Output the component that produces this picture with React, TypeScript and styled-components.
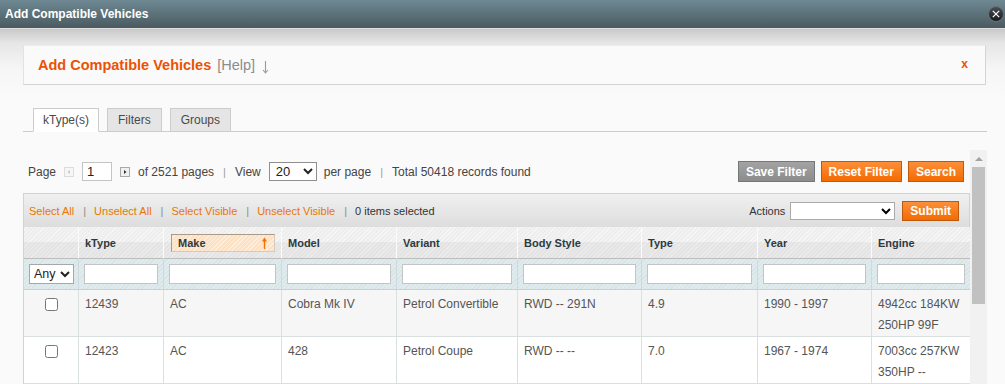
import styled, { createGlobalStyle } from 'styled-components'

const FONT = "'Liberation Sans', Arial, Helvetica, sans-serif"

const GlobalStyle = createGlobalStyle`
  * { box-sizing: border-box; }
  html, body { margin: 0; padding: 0; height: 384px; overflow: hidden; }
  body { font-family: ${FONT}; background: #fafafa; color: #444; }
  #root { height: 100%; }
`

const columns = [
  { key: 'check', label: '', width: 55 },
  { key: 'ktype', label: 'kType', width: 85 },
  { key: 'make', label: 'Make', width: 118, sorted: true },
  { key: 'model', label: 'Model', width: 115 },
  { key: 'variant', label: 'Variant', width: 121 },
  { key: 'body', label: 'Body Style', width: 124 },
  { key: 'type', label: 'Type', width: 116 },
  { key: 'year', label: 'Year', width: 114 },
  { key: 'engine', label: 'Engine', width: 99 },
]

const rows = [
  {
    ktype: '12439',
    make: 'AC',
    model: 'Cobra Mk IV',
    variant: 'Petrol Convertible',
    body: 'RWD -- 291N',
    type: '4.9',
    year: '1990 - 1997',
    engine: '4942cc 184KW 250HP 99F',
  },
  {
    ktype: '12423',
    make: 'AC',
    model: '428',
    variant: 'Petrol Coupe',
    body: 'RWD -- --',
    type: '7.0',
    year: '1967 - 1974',
    engine: '7003cc 257KW 350HP --',
  },
]

const CloseIcon = () => (
  <svg width="16" height="16" viewBox="0 0 16 16">
    <defs>
      <linearGradient id="cl" x1="0" y1="0" x2="0" y2="1">
        <stop offset="0" stopColor="#4a5054" />
        <stop offset="1" stopColor="#15191b" />
      </linearGradient>
    </defs>
    <circle cx="8" cy="8" r="7.5" fill="url(#cl)" stroke="#6b7377" />
    <path d="M4.8 4.8 L11.2 11.2 M11.2 4.8 L4.8 11.2" stroke="#fff" strokeWidth="1.2" />
  </svg>
)

const DownArrow = () => (
  <svg width="7" height="14" viewBox="0 0 7 14">
    <path d="M3.5 1 V13 M1 10 L3.5 13 L6 10" stroke="#9a9a9a" strokeWidth="1.1" fill="none" />
  </svg>
)

const UpArrow = () => (
  <svg width="7" height="12" viewBox="0 0 7 12">
    <path d="M3.5 3 V12" stroke="#f07000" strokeWidth="1.4" />
    <path d="M1 4.5 L3.5 0.5 L6 4.5 Z" fill="#f07000" />
  </svg>
)

const PagerArrow = ({ dir, disabled }: { dir: 'prev' | 'next'; disabled?: boolean }) => (
  <ArrowBox>
    <svg width="10" height="10" viewBox="0 0 10 10">
      <rect
        x="0.5"
        y="0.5"
        width="9"
        height="9"
        fill={disabled ? '#f6f6f6' : '#f0f0f0'}
        stroke={disabled ? '#dddddd' : '#a9a9a9'}
      />
      {dir === 'prev' ? (
        <path d="M6 3 L3.5 5 L6 7 Z" fill={disabled ? '#c8c8c8' : '#333'} />
      ) : (
        <path d="M4 3 L6.5 5 L4 7 Z" fill={disabled ? '#c8c8c8' : '#333'} />
      )}
    </svg>
  </ArrowBox>
)

export default function App() {
  return (
    <Window>
      <GlobalStyle />
      <TitleBar>
        <span>Add Compatible Vehicles</span>
        <CloseButton aria-label="Close">
          <CloseIcon />
        </CloseButton>
      </TitleBar>
      <Body>
        <HeaderBox>
          <HeaderTitle>
            Add Compatible Vehicles <Help>[Help]</Help>
            <HelpArrow>
              <DownArrow />
            </HelpArrow>
          </HeaderTitle>
          <Dismiss>x</Dismiss>
        </HeaderBox>

        <TabStrip>
          <Tab $active>kType(s)</Tab>
          <Tab>Filters</Tab>
          <Tab>Groups</Tab>
        </TabStrip>

        <ScrollArea>
          <ScrollContent>
            <Pager>
              <PagerInfo>
                Page
                <PagerArrow dir="prev" disabled />
                <PageInput defaultValue="1" />
                <PagerArrow dir="next" />
                <span>of 2521 pages</span>
                <Sep>|</Sep>
                View
                <PerPage defaultValue="20">
                  <option>20</option>
                  <option>30</option>
                  <option>50</option>
                </PerPage>
                <span>per page</span>
                <Sep>|</Sep>
                Total 50418 records found
              </PagerInfo>
              <ButtonGroup>
                <Button $variant="gray">Save Filter</Button>
                <Button>Reset Filter</Button>
                <Button>Search</Button>
              </ButtonGroup>
            </Pager>

            <MassBar>
              <MassLinks>
                <MassLink>Select All</MassLink>
                <MassSep>|</MassSep>
                <MassLink>Unselect All</MassLink>
                <MassSep>|</MassSep>
                <MassLink>Select Visible</MassLink>
                <MassSep>|</MassSep>
                <MassLink>Unselect Visible</MassLink>
                <MassSep>|</MassSep>
                <Selected>0 items selected</Selected>
              </MassLinks>
              <Actions>
                Actions
                <ActionSelect defaultValue="">
                  <option value=""></option>
                </ActionSelect>
                <SubmitButton>Submit</SubmitButton>
              </Actions>
            </MassBar>

            <Grid>
              <colgroup>
                {columns.map(c => (
                  <col key={c.key} style={{ width: c.width }} />
                ))}
              </colgroup>
              <thead>
                <tr>
                  {columns.map(c => (
                    <HeadCell key={c.key} $sorted={c.sorted}>
                      {c.sorted ? (
                        <SortBox>
                          {c.label}
                          <UpArrow />
                        </SortBox>
                      ) : (
                        c.label
                      )}
                    </HeadCell>
                  ))}
                </tr>
                <tr>
                  {columns.map(c => (
                    <FilterCell key={c.key}>
                      {c.key === 'check' ? (
                        <AnySelect defaultValue="any">
                          <option value="any">Any</option>
                          <option value="yes">Yes</option>
                          <option value="no">No</option>
                        </AnySelect>
                      ) : (
                        <FilterInput />
                      )}
                    </FilterCell>
                  ))}
                </tr>
              </thead>
              <tbody>
                {rows.map((r, i) => (
                  <Row key={r.ktype} $odd={i % 2 === 0}>
                    <CheckCell>
                      <input type="checkbox" />
                    </CheckCell>
                    <Cell>{r.ktype}</Cell>
                    <Cell>{r.make}</Cell>
                    <Cell>{r.model}</Cell>
                    <Cell>{r.variant}</Cell>
                    <Cell>{r.body}</Cell>
                    <Cell>{r.type}</Cell>
                    <Cell>{r.year}</Cell>
                    <Cell>{r.engine}</Cell>
                  </Row>
                ))}
              </tbody>
            </Grid>
          </ScrollContent>

          <Scrollbar>
            <ScrollButton>
              <svg width="8" height="4" viewBox="0 0 8 4">
                <path d="M0 4 L4 0 L8 4 Z" fill="#a3a3a3" />
              </svg>
            </ScrollButton>
            <Thumb />
          </Scrollbar>
        </ScrollArea>
      </Body>
    </Window>
  )
}

const Window = styled.div`
  display: flex;
  flex-direction: column;
  height: 384px;
`

const TitleBar = styled.header`
  flex: none;
  height: 29px;
  display: flex;
  align-items: center;
  justify-content: space-between;
  padding: 0 1px 1px 5px;
  background: linear-gradient(#6e8993, #4a5a60);
  border-bottom: 1px solid #dedede;
  color: #fff;
  font-size: 12px;
  font-weight: bold;
`

const CloseButton = styled.button`
  display: flex;
  padding: 0;
  border: none;
  background: none;
`

const Body = styled.main`
  flex: 1;
  min-height: 0;
  display: flex;
  flex-direction: column;
  padding: 16px 18px 0 23px;
  background: linear-gradient(#c9c9c9 0, #e6e6e6 14px, #f6f6f6 40px, #fafafa 70px);
`

const HeaderBox = styled.section`
  flex: none;
  height: 40px;
  margin-right: 1px;
  display: flex;
  align-items: center;
  justify-content: space-between;
  padding: 0 17px 0 14px;
  background: #fafafa;
  border: 1px solid;
  border-color: #ececec #d4d4d4 #d4d4d4 #e2e2e2;
`

const HeaderTitle = styled.h2`
  margin: 0;
  display: flex;
  align-items: center;
  white-space: pre;
  font-size: 14.5px;
  font-weight: bold;
  color: #eb5202;
`

const Help = styled.span`
  margin-left: 2px;
  font-weight: normal;
  color: #8c8c8c;
`

const HelpArrow = styled.span`
  display: flex;
  margin: 3px 0 0 7px;
`

const Dismiss = styled.span`
  margin-top: -2px;
  font-size: 12px;
  font-weight: bold;
  color: #eb5202;
`

const TabStrip = styled.nav`
  flex: none;
  height: 24px;
  margin-top: 23px;
  display: flex;
  gap: 8px;
  padding-left: 10px;
  border-bottom: 1px solid #cccccc;
`

const Tab = styled.button<{ $active?: boolean }>`
  height: 24px;
  padding: ${p => (p.$active ? '0 9px' : '0 10px')};
  font: 12px ${FONT};
  color: #4a4a4a;
  border: 1px solid #cccccc;
  border-bottom-color: ${p => (p.$active ? '#ffffff' : '#cccccc')};
  background: ${p => (p.$active ? '#ffffff' : '#e5e5e5')};
`

const ScrollArea = styled.div`
  flex: 1;
  min-height: 0;
  margin-top: 18px;
  display: flex;
`

const ScrollContent = styled.div`
  flex: 1;
  min-width: 0;
  overflow: hidden;
`

const Scrollbar = styled.div`
  flex: none;
  width: 17px;
  display: flex;
  flex-direction: column;
  background: #f1f1f1;
`

const ScrollButton = styled.div`
  height: 17px;
  display: flex;
  align-items: center;
  justify-content: center;
`

const Thumb = styled.div`
  height: 137px;
  margin: 0 2px;
  background: #c1c1c1;
`

const Pager = styled.div`
  display: flex;
  align-items: center;
  justify-content: space-between;
  height: 43px;
  padding: 0 6px 0 5px;
  font-size: 12px;
  color: #444;
`

const PagerInfo = styled.div`
  display: flex;
  align-items: center;
  white-space: nowrap;
`

const ArrowBox = styled.span`
  display: flex;
  margin: 0 8px;
`

const PageInput = styled.input`
  width: 30px;
  height: 19px;
  padding: 0 4px;
  border: 1px solid #c4c4c4;
  font: 13px ${FONT};
  color: #222;
`

const Sep = styled.span`
  margin: 0 9px;
  color: #9a9a9a;
  font-size: 11px;
`

const PerPage = styled.select`
  width: 48px;
  height: 19px;
  margin: 0 7px 0 8px;
  padding: 0 2px;
  border: 1px solid #8f8f8f;
  border-radius: 0;
  background: #fff;
  font: 13px ${FONT};
  color: #222;
`

const ButtonGroup = styled.div`
  display: flex;
  gap: 6px;
`

const Button = styled.button<{ $variant?: 'gray' | 'orange' }>`
  height: 21px;
  padding: 0 7px;
  font: bold 12px ${FONT};
  color: #fff;
  border: 1px solid ${p => (p.$variant === 'gray' ? '#777777' : '#bf5a0c')};
  background: ${p =>
    p.$variant === 'gray'
      ? 'linear-gradient(#a3a3a3, #8c8c8c)'
      : 'linear-gradient(#fc8f3a, #f36b00)'};
`

const MassBar = styled.div`
  height: 34px;
  display: flex;
  align-items: center;
  justify-content: space-between;
  padding: 0 10px 0 5px;
  border: 1px solid #d2d2d2;
  border-bottom: none;
  background: linear-gradient(#f0f0f0, #dddddd);
  font-size: 11px;
`

const MassLinks = styled.div`
  display: flex;
  align-items: center;
`

const MassLink = styled.a`
  color: #ea7601;
  cursor: pointer;
`

const MassSep = styled.span`
  margin: 0 8px 0 9px;
  color: #8c8c8c;
`

const Selected = styled.span`
  color: #333;
`

const Actions = styled.div`
  display: flex;
  align-items: center;
  color: #333;
`

const ActionSelect = styled.select`
  width: 105px;
  height: 18px;
  margin: 0 7px 0 5px;
  border: 1px solid #aaaaaa;
  border-radius: 0;
  background: #fff;
  font: 12px ${FONT};
`

const SubmitButton = styled(Button)`
  height: 20px;
  padding: 0 7px;
`

const Grid = styled.table`
  width: 100%;
  table-layout: fixed;
  border-collapse: separate;
  border-spacing: 0;
  border-left: 1px solid #d2d2d2;
`

const HeadCell = styled.th<{ $sorted?: boolean }>`
  height: 32px;
  padding: ${p => (p.$sorted ? '0 6px 0 7px' : '0 6px')};
  text-align: left;
  vertical-align: middle;
  font-size: 11px;
  font-weight: bold;
  color: #2f3a40;
  border-right: 1px solid #fbfbfb;
  border-bottom: 1px solid #bdbdbd;
  background:
    linear-gradient(transparent 50%, rgba(0, 0, 0, 0.045) 50%),
    repeating-linear-gradient(135deg, #eeeeee 0 2px, #f6f6f6 2px 3px);

  &:last-child {
    border-right-color: #d2d2d2;
  }
`

const SortBox = styled.div`
  height: 18px;
  display: flex;
  align-items: center;
  justify-content: space-between;
  padding: 0 6px;
  border: 1px solid;
  border-color: #a89b8c #d6cabb #d6cabb #a89b8c;
  background: repeating-linear-gradient(135deg, #fde1c4 0 2px, #feeedd 2px 3px);
`

const FilterCell = styled.th`
  height: 31px;
  padding: 0 5px;
  text-align: left;
  vertical-align: middle;
  border-right: 1px solid #cdd9dc;
  border-bottom: 1px solid #c6d1d4;
  background: repeating-linear-gradient(135deg, #e0ebee 0 2px, #d7e4e7 2px 3px);

  &:last-child {
    border-right-color: #d2d2d2;
  }
`

const FilterInput = styled.input`
  display: block;
  width: 100%;
  height: 20px;
  border: 1px solid #c4c4c4;
  background: #fff;
  font: 12px ${FONT};
`

const AnySelect = styled.select`
  display: block;
  width: 45px;
  height: 20px;
  padding: 0;
  border: 1px solid #a7a7a7;
  border-radius: 0;
  background: #fff;
  font: 12.5px ${FONT};
  color: #222;
`

const Row = styled.tr<{ $odd?: boolean }>`
  background: ${p => (p.$odd ? '#f6f6f6' : '#ffffff')};
`

const Cell = styled.td`
  padding: 4px 6px 0;
  vertical-align: top;
  font-size: 12px;
  line-height: 21px;
  color: #555555;
  border-right: 1px solid #dadfe0;
  border-bottom: 1px solid #dadfe0;

  &:last-child {
    border-right-color: #d2d2d2;
  }
`

const CheckCell = styled(Cell)`
  text-align: center;

  & > input {
    width: 13px;
    height: 13px;
    margin: 0;
    vertical-align: middle;
  }
`
